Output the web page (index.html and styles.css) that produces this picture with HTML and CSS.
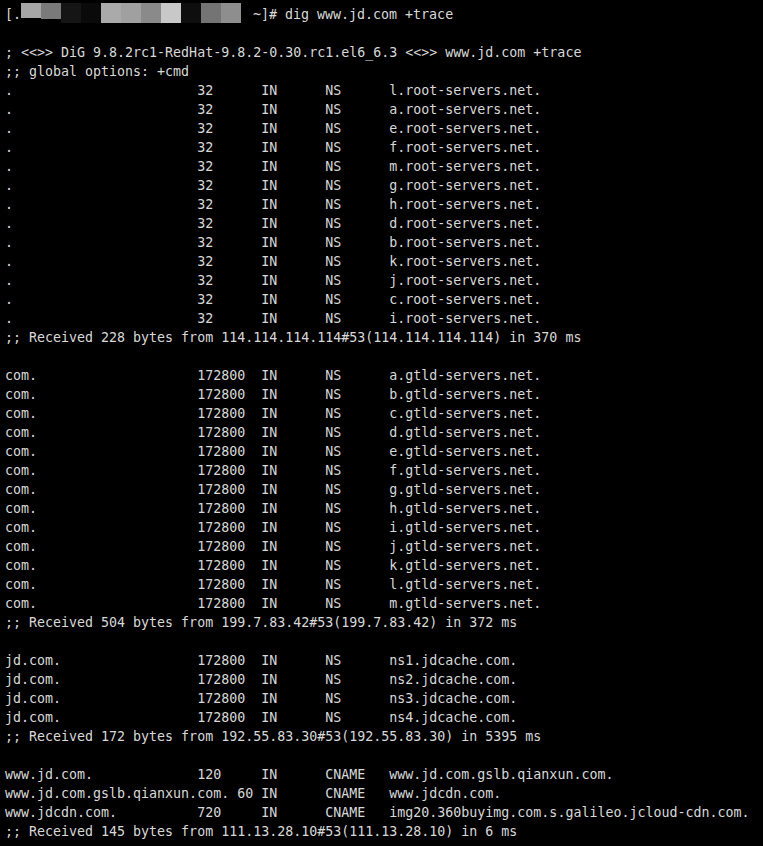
FILE: index.html
```html
<!DOCTYPE html>
<html>
<head>
<meta charset="utf-8">
<link rel="stylesheet" href="styles.css">
</head>
<body>
<div class="term">
<div class="prompt"><span class="pfx">[.</span><span class="redact"><i class="b1"></i><i class="b2"></i><i class="b3"></i><i class="b4"></i><i class="b5"></i><i class="b6"></i><i class="b7"></i><i class="b8"></i><i class="b9"></i><i class="b10"></i><i class="b11"></i></span><span>~]# dig www.jd.com +trace</span></div>
<pre class="out">; &lt;&lt;&gt;&gt; DiG 9.8.2rc1-RedHat-9.8.2-0.30.rc1.el6_6.3 &lt;&lt;&gt;&gt; www.jd.com +trace
;; global options: +cmd
.&#9;&#9;&#9;32&#9;IN&#9;NS&#9;l.root-servers.net.
.&#9;&#9;&#9;32&#9;IN&#9;NS&#9;a.root-servers.net.
.&#9;&#9;&#9;32&#9;IN&#9;NS&#9;e.root-servers.net.
.&#9;&#9;&#9;32&#9;IN&#9;NS&#9;f.root-servers.net.
.&#9;&#9;&#9;32&#9;IN&#9;NS&#9;m.root-servers.net.
.&#9;&#9;&#9;32&#9;IN&#9;NS&#9;g.root-servers.net.
.&#9;&#9;&#9;32&#9;IN&#9;NS&#9;h.root-servers.net.
.&#9;&#9;&#9;32&#9;IN&#9;NS&#9;d.root-servers.net.
.&#9;&#9;&#9;32&#9;IN&#9;NS&#9;b.root-servers.net.
.&#9;&#9;&#9;32&#9;IN&#9;NS&#9;k.root-servers.net.
.&#9;&#9;&#9;32&#9;IN&#9;NS&#9;j.root-servers.net.
.&#9;&#9;&#9;32&#9;IN&#9;NS&#9;c.root-servers.net.
.&#9;&#9;&#9;32&#9;IN&#9;NS&#9;i.root-servers.net.
;; Received 228 bytes from 114.114.114.114#53(114.114.114.114) in 370 ms

com.&#9;&#9;&#9;172800&#9;IN&#9;NS&#9;a.gtld-servers.net.
com.&#9;&#9;&#9;172800&#9;IN&#9;NS&#9;b.gtld-servers.net.
com.&#9;&#9;&#9;172800&#9;IN&#9;NS&#9;c.gtld-servers.net.
com.&#9;&#9;&#9;172800&#9;IN&#9;NS&#9;d.gtld-servers.net.
com.&#9;&#9;&#9;172800&#9;IN&#9;NS&#9;e.gtld-servers.net.
com.&#9;&#9;&#9;172800&#9;IN&#9;NS&#9;f.gtld-servers.net.
com.&#9;&#9;&#9;172800&#9;IN&#9;NS&#9;g.gtld-servers.net.
com.&#9;&#9;&#9;172800&#9;IN&#9;NS&#9;h.gtld-servers.net.
com.&#9;&#9;&#9;172800&#9;IN&#9;NS&#9;i.gtld-servers.net.
com.&#9;&#9;&#9;172800&#9;IN&#9;NS&#9;j.gtld-servers.net.
com.&#9;&#9;&#9;172800&#9;IN&#9;NS&#9;k.gtld-servers.net.
com.&#9;&#9;&#9;172800&#9;IN&#9;NS&#9;l.gtld-servers.net.
com.&#9;&#9;&#9;172800&#9;IN&#9;NS&#9;m.gtld-servers.net.
;; Received 504 bytes from 199.7.83.42#53(199.7.83.42) in 372 ms

jd.com.&#9;&#9;&#9;172800&#9;IN&#9;NS&#9;ns1.jdcache.com.
jd.com.&#9;&#9;&#9;172800&#9;IN&#9;NS&#9;ns2.jdcache.com.
jd.com.&#9;&#9;&#9;172800&#9;IN&#9;NS&#9;ns3.jdcache.com.
jd.com.&#9;&#9;&#9;172800&#9;IN&#9;NS&#9;ns4.jdcache.com.
;; Received 172 bytes from 192.55.83.30#53(192.55.83.30) in 5395 ms

www.jd.com.&#9;&#9;120&#9;IN&#9;CNAME&#9;www.jd.com.gslb.qianxun.com.
www.jd.com.gslb.qianxun.com. 60 IN&#9;CNAME&#9;www.jdcdn.com.
www.jdcdn.com.&#9;&#9;720&#9;IN&#9;CNAME&#9;img20.360buyimg.com.s.galileo.jcloud-cdn.com.
;; Received 145 bytes from 111.13.28.10#53(111.13.28.10) in 6 ms</pre>
</div>
</body>
</html>
```

FILE: styles.css
```css
html, body {
  margin: 0;
  padding: 0;
  background: #000;
}

.term {
  background: #000;
  color: #d8d8d8;
  font-family: "DejaVu Sans Mono", "Liberation Mono", monospace;
  font-size: 13.3px;
  line-height: 19px;
  padding: 5px 0 0 5px;
  min-height: 841px;
  box-sizing: border-box;
}

.prompt {
  display: flex;
  align-items: flex-start;
  height: 19px;
  white-space: pre;
}

.pfx {
  width: 16px;
  flex: none;
}

.redact {
  display: flex;
  width: 232px;
  height: 20px;
  margin-top: -2px;
  flex: none;
}

.redact i {
  display: block;
  width: 20px;
  height: 20px;
}

.redact .b1 { background: #a6a6a6; height: 15px; }
.redact .b2 { background: #7a7a7a; height: 16px; }
.redact .b3 { background: #151515; }
.redact .b4 { background: #0a0a0a; }
.redact .b5 { background: #aaaaaa; }
.redact .b6 { background: #a0a0a0; }
.redact .b7 { background: #8a8a8a; }
.redact .b8 { background: #c8c8c8; }
.redact .b9 { background: #0e0e0e; }
.redact .b10 { background: #747474; }
.redact .b11 { background: #8e8e8e; }

.out {
  margin: 19px 0 0 0;
  font: inherit;
  line-height: 19px;
  tab-size: 8;
  -moz-tab-size: 8;
  white-space: pre;
}
```
